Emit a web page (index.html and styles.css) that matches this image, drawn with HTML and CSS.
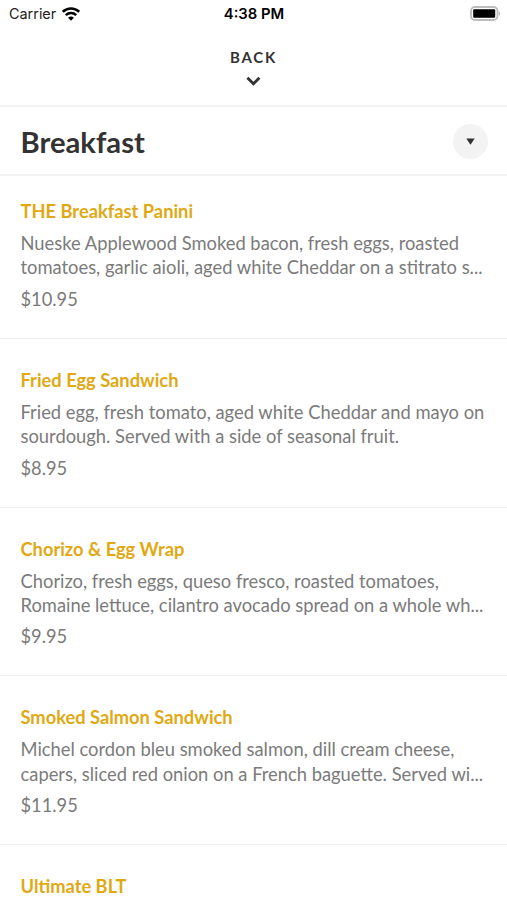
FILE: index.html
```html
<!DOCTYPE html>
<html lang="en">
<head>
<meta charset="utf-8">
<title>Breakfast</title>
<link rel="stylesheet" href="styles.css">
</head>
<body>
<div class="status">
  <div class="carrier"><span>Carrier</span>
    <svg width="18" height="14" viewBox="0 0 18 14"><g fill="none" stroke="#000" stroke-width="2.5"><path d="M.8 4.8C5.4.4 12.6.4 17.2 4.8"/><path d="M3.8 8.2c3-2.8 7.4-2.8 10.4 0"/></g><path d="M9 13.7 6.1 10.7c1.7-1.5 4.1-1.5 5.8 0z"/></svg>
  </div>
  <div class="time">4:38 PM</div>
  <svg class="battery" width="31" height="15" viewBox="0 0 31 15"><rect x="1" y="1" width="26.5" height="13" rx="4" fill="none" stroke="#bdbdbd" stroke-width="1.8"/><rect x="3.2" y="3.2" width="22" height="8.6" rx="1"/><path d="M28.7 5.2c2 .8 2 3.8 0 4.6z" fill="#bdbdbd"/></svg>
</div>
<header class="back"><span>BACK</span>
  <svg width="16" height="10" viewBox="0 0 16 10"><path d="m1.4 1.8 6 6 6-6" fill="none" stroke="#333" stroke-width="2.9"/></svg>
</header>
<div class="heading"><h1>Breakfast</h1>
  <button class="toggle" aria-label="Choose menu"><svg width="9" height="7" viewBox="0 0 9 7"><path d="M.3.5h8.4L4.5 6.7z" fill="#333"/></svg></button>
</div>
<main>
  <article class="item"><h2>THE Breakfast Panini</h2><p>Nueske Applewood Smoked bacon, fresh eggs, roasted<br>tomatoes, garlic aioli, aged white Cheddar on a stitrato s...</p><div class="price">$10.95</div></article>
  <article class="item"><h2>Fried Egg Sandwich</h2><p>Fried egg, fresh tomato, aged white Cheddar and mayo on<br>sourdough. Served with a side of seasonal fruit.</p><div class="price">$8.95</div></article>
  <article class="item"><h2>Chorizo &amp; Egg Wrap</h2><p>Chorizo, fresh eggs, queso fresco, roasted tomatoes,<br>Romaine lettuce, cilantro avocado spread on a whole wh...</p><div class="price">$9.95</div></article>
  <article class="item"><h2>Smoked Salmon Sandwich</h2><p>Michel cordon bleu smoked salmon, dill cream cheese,<br>capers, sliced red onion on a French baguette. Served wi...</p><div class="price">$11.95</div></article>
  <article class="item"><h2>Ultimate BLT</h2></article>
</main>
</body>
</html>
```
FILE: styles.css
```css
* { box-sizing: border-box; }
body { margin: 0; height: 900px; overflow: hidden; background: #fff; color: #333; font-family: Lato, sans-serif; }
svg { display: block; flex: none; }
.status { height: 27px; padding: 0 6px 0 9px; display: grid; grid-template-columns: 1fr auto 1fr; align-items: center; color: #000; font: 15px/27px Inter, sans-serif; }
.carrier { display: flex; align-items: center; gap: 6px; }
.carrier span { font-size: 14.4px; color: #222; }
.time { font-weight: 600; font-size: 14.8px; margin: 2px 2px 0 0; line-height: 25px; }
.battery { justify-self: end; }
.back { height: 80px; padding-top: 20px; border-bottom: 2px solid #f3f3f3; display: flex; flex-direction: column; align-items: center; gap: 9px; font-size: 15px; line-height: 20px; font-weight: 700; letter-spacing: 1.7px; }
.heading { height: 69px; padding: 0 19px 0 20.5px; border-bottom: 2px solid #f3f3f3; display: flex; align-items: center; justify-content: space-between; }
h1 { margin: 3px 0 0; font-size: 29.2px; line-height: 36px; font-weight: 700; }
.toggle { width: 35px; height: 35px; margin-top: 2px; padding: 0; border: 0; border-radius: 50%; background: #f3f3f3; display: grid; place-items: center; }
main { height: 724px; overflow: hidden; }
.item { height: 168.6px; padding: 29px 20.5px 0; border-bottom: 1px solid #eee; }
.item:first-child { height: 163px; padding-top: 23px; }
h2 { margin: 0; color: #e0a914; font-size: 18.3px; line-height: 24px; font-weight: 700; }
p { margin: 8px 0 0; color: #7b7b7b; font-size: 18.35px; line-height: 24.4px; white-space: nowrap; }
.price { margin-top: 7px; color: #7b7b7b; font-size: 18.3px; line-height: 24px; }
```
